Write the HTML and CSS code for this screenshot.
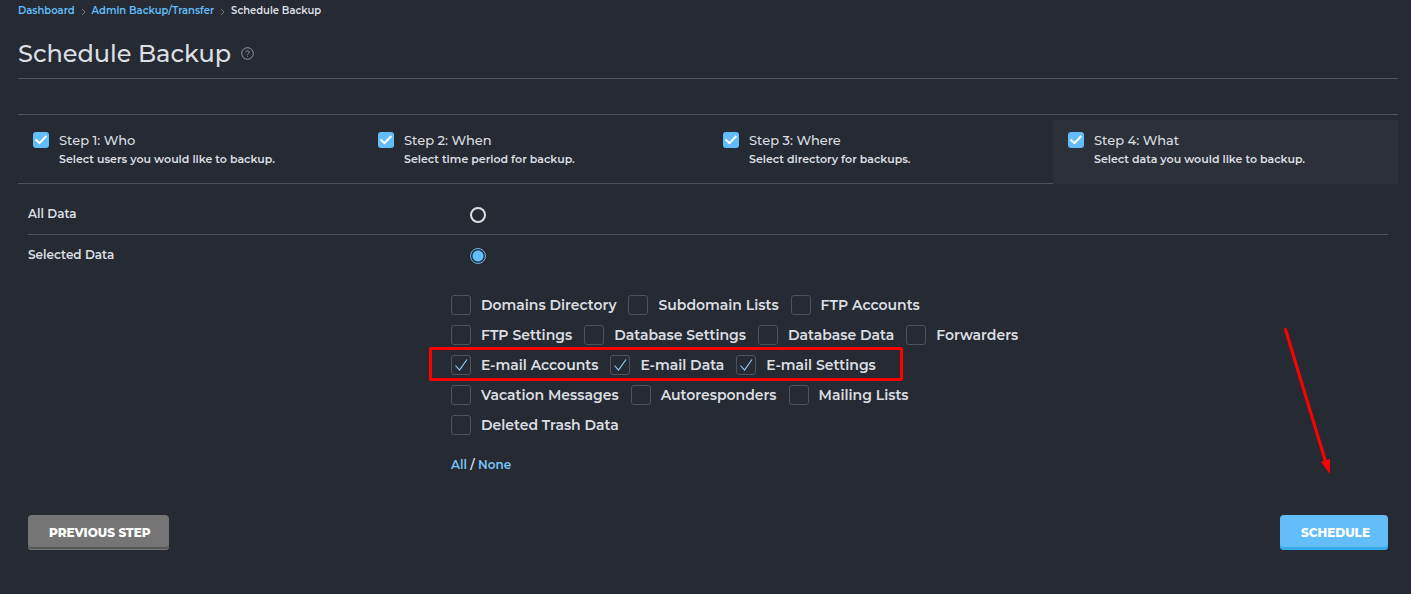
FILE: index.html
```html
<!DOCTYPE html>
<html lang="en">
<head>
<meta charset="utf-8">
<meta name="viewport" content="width=device-width, initial-scale=1">
<title>Schedule Backup</title>
<link rel="stylesheet" href="styles.css">
</head>
<body>
<main class="page">
  <nav class="breadcrumbs" aria-label="Breadcrumb">
    <a href="#">Dashboard</a>
    <svg class="chevron" viewBox="0 0 5 8" aria-hidden="true"><path d="M1 1l3 3-3 3"/></svg>
    <a href="#">Admin Backup/Transfer</a>
    <svg class="chevron" viewBox="0 0 5 8" aria-hidden="true"><path d="M1 1l3 3-3 3"/></svg>
    <span>Schedule Backup</span>
  </nav>

  <header class="heading">
    <h1>Schedule Backup</h1>
    <svg class="help" viewBox="0 0 13 13" aria-hidden="true"><circle cx="6.5" cy="6.5" r="5.8"/><path d="M4.900 5.200c0-2 3.400-2 3.400 0 0 1.200-1.700 1.200-1.700 2.300M6.600 8.700v1"/></svg>
  </header>

  <ol class="steps">
    <li class="step">
      <svg class="tick" viewBox="0 0 16 16" aria-hidden="true"><rect width="16" height="16" rx="3"/><path d="M2.500 7.500l4 3.700L13.300 4"/></svg>
      <div><div class="step-name">Step 1: Who</div><div class="step-note">Select users you would like to backup.</div></div>
    </li>
    <li class="step">
      <svg class="tick" viewBox="0 0 16 16" aria-hidden="true"><rect width="16" height="16" rx="3"/><path d="M2.500 7.500l4 3.700L13.300 4"/></svg>
      <div><div class="step-name">Step 2: When</div><div class="step-note">Select time period for backup.</div></div>
    </li>
    <li class="step">
      <svg class="tick" viewBox="0 0 16 16" aria-hidden="true"><rect width="16" height="16" rx="3"/><path d="M2.500 7.500l4 3.700L13.300 4"/></svg>
      <div><div class="step-name">Step 3: Where</div><div class="step-note">Select directory for backups.</div></div>
    </li>
    <li class="step current" aria-current="step">
      <svg class="tick" viewBox="0 0 16 16" aria-hidden="true"><rect width="16" height="16" rx="3"/><path d="M2.500 7.500l4 3.700L13.300 4"/></svg>
      <div><div class="step-name">Step 4: What</div><div class="step-note">Select data you would like to backup.</div></div>
    </li>
  </ol>

  <form class="form">
    <div class="row divided">
      <label for="all-data">All Data</label>
      <div class="field"><input class="radio" type="radio" name="data" id="all-data"></div>
    </div>
    <div class="row">
      <label for="selected-data">Selected Data</label>
      <div class="field"><input class="radio" type="radio" name="data" id="selected-data" checked></div>
    </div>

    <div class="options">
      <div class="option-row">
        <label class="option"><input type="checkbox">Domains Directory</label>
        <label class="option"><input type="checkbox">Subdomain Lists</label>
        <label class="option"><input type="checkbox">FTP Accounts</label>
      </div>
      <div class="option-row">
        <label class="option"><input type="checkbox">FTP Settings</label>
        <label class="option"><input type="checkbox">Database Settings</label>
        <label class="option"><input type="checkbox">Database Data</label>
        <label class="option"><input type="checkbox">Forwarders</label>
      </div>
      <div class="option-row highlighted">
        <label class="option"><input type="checkbox" checked>E-mail Accounts</label>
        <label class="option"><input type="checkbox" checked>E-mail Data</label>
        <label class="option"><input type="checkbox" checked>E-mail Settings</label>
      </div>
      <div class="option-row">
        <label class="option"><input type="checkbox">Vacation Messages</label>
        <label class="option"><input type="checkbox">Autoresponders</label>
        <label class="option"><input type="checkbox">Mailing Lists</label>
      </div>
      <div class="option-row">
        <label class="option"><input type="checkbox">Deleted Trash Data</label>
      </div>
      <div class="bulk"><a href="#">All</a> / <a href="#">None</a></div>
    </div>

    <div class="actions">
      <button class="button secondary" type="button">PREVIOUS STEP</button>
      <button class="button primary" type="submit">SCHEDULE</button>
      <svg class="arrow" viewBox="0 0 48 148" aria-hidden="true"><path class="shaft" d="M2.500 2.500L43 136"/><path class="head" d="M38 135l9-3v15z"/></svg>
    </div>
  </form>
</main>
</body>
</html>
```

FILE: styles.css
```css
* {
  box-sizing: border-box;
}

body {
  margin: 0;
  background: #262a33;
  color: #dcdfe2;
  font-family: Montserrat, Inter, "Open Sans", sans-serif;
  font-size: 12px;
  font-weight: 600;
}

a {
  color: #62bdf8;
  text-decoration: none;
}

.page {
  padding: 0 13px 24px 18px;
}

.breadcrumbs {
  display: flex;
  align-items: center;
  gap: 6px;
  height: 21px;
  font-size: 10px;
}

.chevron {
  width: 5px;
  height: 8px;
  margin-top: 3px;
  fill: none;
  stroke: #6e737c;
}

.heading {
  display: flex;
  align-items: center;
  gap: 10px;
  height: 58px;
  padding-top: 8px;
  border-bottom: 1px solid #4c535f;
}

h1 {
  margin: 0;
  font-size: 24px;
  line-height: 32px;
  font-weight: 500;
}

.help {
  width: 13px;
  height: 13px;
  fill: none;
  stroke: #9195a0;
}

.steps {
  display: grid;
  grid-template-columns: repeat(4, 1fr);
  margin: 35px 0 0;
  padding: 5px 0 0;
  border-top: 1px solid #4c535f;
  list-style: none;
}

.step {
  display: flex;
  gap: 10px;
  height: 64px;
  padding: 12px 15px;
  border-bottom: 1px solid #4c535f;
}

.current {
  background: #2c3038;
  border-color: #2c3038;
}

.tick {
  flex: none;
  width: 16px;
  height: 16px;
  fill: #62bdf8;
}

.tick path {
  fill: none;
  stroke: #fff;
  stroke-width: 2;
}

.step-name {
  font-size: 13px;
  line-height: 16px;
  font-weight: 500;
}

.step-note {
  font-size: 11px;
  line-height: 22px;
}

.form {
  padding: 10px 10px 0;
}

.row {
  display: grid;
  grid-template-columns: 31.1% 1fr;
  align-items: center;
  height: 41px;
}

.row label {
  padding-bottom: 2px;
}

.divided {
  border-bottom: 1px solid #4c535f;
}

.field {
  display: flex;
  padding: 1px 0 0 19px;
}

.radio {
  appearance: none;
  width: 16px;
  height: 16px;
  margin: 0;
  border: 2px solid #dcdfe2;
  border-radius: 50%;
}

.radio:checked {
  border: 1px solid #62bdf8;
  background: radial-gradient(circle, #62bdf8 5px, transparent 6px);
}

.options {
  display: grid;
  gap: 10px;
  margin: 19px 0 0 31.1%;
}

.option-row {
  display: flex;
  gap: 12px;
  width: fit-content;
}

.option {
  display: flex;
  align-items: center;
  gap: 10px;
  font-size: 14px;
  line-height: 20px;
}

.option input {
  appearance: none;
  width: 20px;
  height: 20px;
  margin: 0;
  border: 1px solid #4c535f;
  border-radius: 3px;
}

.option input:checked {
  background: url("data:image/svg+xml,%3Csvg xmlns='http://www.w3.org/2000/svg' viewBox='0 0 18 18'%3E%3Cpath d='M3.500 9.500l4 4.500 7.500-10.500' fill='none' stroke='%238fd2fc' stroke-width='1.100'/%3E%3C/svg%3E");
}

.highlighted {
  position: relative;
}

.highlighted::after {
  content: "";
  position: absolute;
  inset: -8px -27px -6px -22px;
  border: 3px solid #f00;
  border-radius: 2px;
  pointer-events: none;
}

.bulk {
  margin-top: 10px;
  line-height: 20px;
}

.bulk a {
  color: #79c5f5;
}

.actions {
  position: relative;
  display: flex;
  justify-content: space-between;
  margin-top: 40px;
}

.button {
  height: 35px;
  padding: 0 18px 0 21px;
  border: 0;
  border-radius: 4px;
  color: #fff;
  font: inherit;
  font-weight: 800;
}

.primary {
  background: #62bdf8;
  box-shadow: inset 0 -3px #36abee;
}

.secondary {
  background: #757575;
  box-shadow: inset 0 -1px #757575, inset 0 -3px #575957;
}

.arrow {
  position: absolute;
  right: 57px;
  bottom: 75px;
  width: 48px;
  height: 148px;
  fill: #f00;
  pointer-events: none;
}

.shaft {
  stroke: #f00;
  stroke-width: 3;
  stroke-linecap: round;
}
```
